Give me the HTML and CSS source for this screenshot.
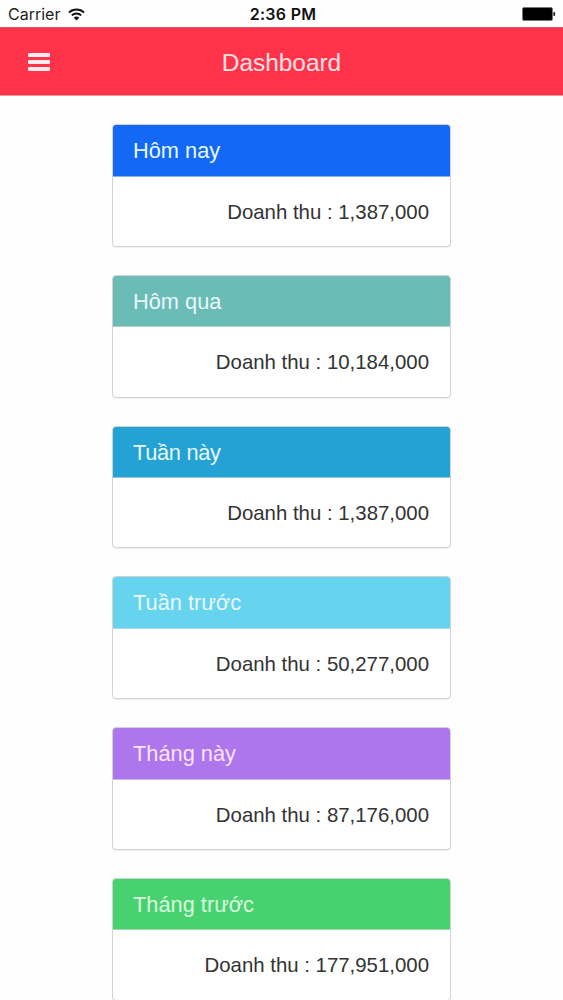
FILE: index.html
```html
<!DOCTYPE html>
<html lang="vi">

<head>
    <meta charset="UTF-8">
    <meta name="viewport" content="width=device-width, initial-scale=1.0">
    <title>Dashboard</title>
    <link rel="stylesheet" href="styles.css">
</head>

<body>
    <div class="status">
        <div class="carrier">
            <span>Carrier</span>
            <svg class="wifi" width="17" height="13" viewBox="0 0 17 13">
                <path d="M1 4.6a10.8 10.8 0 0 1 15 0M3.8 7.4a6.8 6.8 0 0 1 9.4 0" fill="none" stroke="#111" stroke-width="2" />
                <path d="M8.5 12.6L5.7 9.8a4 4 0 0 1 5.6 0z" fill="#111" />
            </svg>
        </div>
        <span class="time">2:36 PM</span>
        <svg class="battery" width="34" height="14" viewBox="0 0 34 14">
            <rect x=".5" y=".5" width="30" height="13" rx="1.5" fill="#000" stroke="#777" />
            <rect x="31.3" y="5" width="1.8" height="4" rx=".8" fill="#222" />
        </svg>
    </div>
    <div class="nav">
        <svg class="menu" width="22" height="20" viewBox="0 0 22 20">
            <rect y="1" width="22" height="4" rx="1" fill="#ffebee" />
            <rect y="8" width="22" height="4" rx="1" fill="#ffebee" />
            <rect y="15" width="22" height="4" rx="1" fill="#ffebee" />
        </svg>
        <h1>Dashboard</h1>
    </div>
    <div class="content">
        <div class="card">
            <div class="card_title today">Hôm nay</div>
            <div class="card_body">Doanh thu : 1,387,000</div>
        </div>
        <div class="card">
            <div class="card_title yesterday">Hôm qua</div>
            <div class="card_body">Doanh thu : 10,184,000</div>
        </div>
        <div class="card">
            <div class="card_title this_week">Tuần này</div>
            <div class="card_body">Doanh thu : 1,387,000</div>
        </div>
        <div class="card">
            <div class="card_title last_week">Tuần trước</div>
            <div class="card_body">Doanh thu : 50,277,000</div>
        </div>
        <div class="card">
            <div class="card_title this_month">Tháng này</div>
            <div class="card_body">Doanh thu : 87,176,000</div>
        </div>
        <div class="card">
            <div class="card_title last_month">Tháng trước</div>
            <div class="card_body">Doanh thu : 177,951,000</div>
        </div>
    </div>
</body>

</html>
```
FILE: styles.css
```css
* {
    margin: 0;
    padding: 0;
    box-sizing: border-box;
}

body {
    height: 100vh;
    overflow: hidden;
    background-color: #fefefe;
    font-family: "Liberation Sans", Arial, sans-serif;
    color: #333;
}

.status {
    display: grid;
    grid-template-columns: 1fr auto 1fr;
    align-items: center;
    height: 27px;
    padding: 1px 7px 0 8px;
    font-family: Inter, sans-serif;
    font-size: 16px;
    color: #222;
}

.carrier {
    display: flex;
    align-items: center;
    gap: 8px;
}

.time {
    padding-left: 2px;
    font-weight: 600;
    letter-spacing: .3px;
    color: #111;
}

.battery {
    justify-self: end;
}

.nav {
    display: grid;
    grid-template-columns: 1fr auto 1fr;
    align-items: center;
    height: 69px;
    padding: 0 28px;
    background-color: #ff344a;
    border-top: 1px solid #e0505f;
    border-bottom: 1px solid #f0939d;
}

.nav h1 {
    padding-top: 2px;
    font-size: 24.4px;
    font-weight: normal;
    color: #ffe1e5;
}

.content {
    display: flex;
    flex-direction: column;
    align-items: center;
    gap: 28px;
    padding-top: 28.4px;
}

.card {
    flex: none;
    width: 339px;
    height: 122.7px;
    border: 1px solid #d2d2d4;
    border-radius: 4px;
    background-color: #fff;
    box-shadow: 0 1px 1px rgba(0, 0, 0, .06);
    overflow: hidden;
}

.card_title {
    height: 51.4px;
    padding-left: 20px;
    border-bottom: 1px solid rgba(221, 221, 221, .6);
    font-size: 21.8px;
    line-height: 51px;
    color: #e8f8fc;
}

.card_body {
    padding-right: 21px;
    font-size: 20.4px;
    line-height: 71px;
    text-align: right;
}

.today {
    background-color: #1368f5;
}

.yesterday {
    background-color: #6bbcb6;
}

.this_week {
    background-color: #23a2d3;
    letter-spacing: -.3px;
}

.last_week {
    background-color: #66d3ef;
}

.this_month {
    background-color: #ae76ec;
    color: #fbe3fb;
}

.last_month {
    background-color: #48d26f;
    color: #d9fae0;
}
```
